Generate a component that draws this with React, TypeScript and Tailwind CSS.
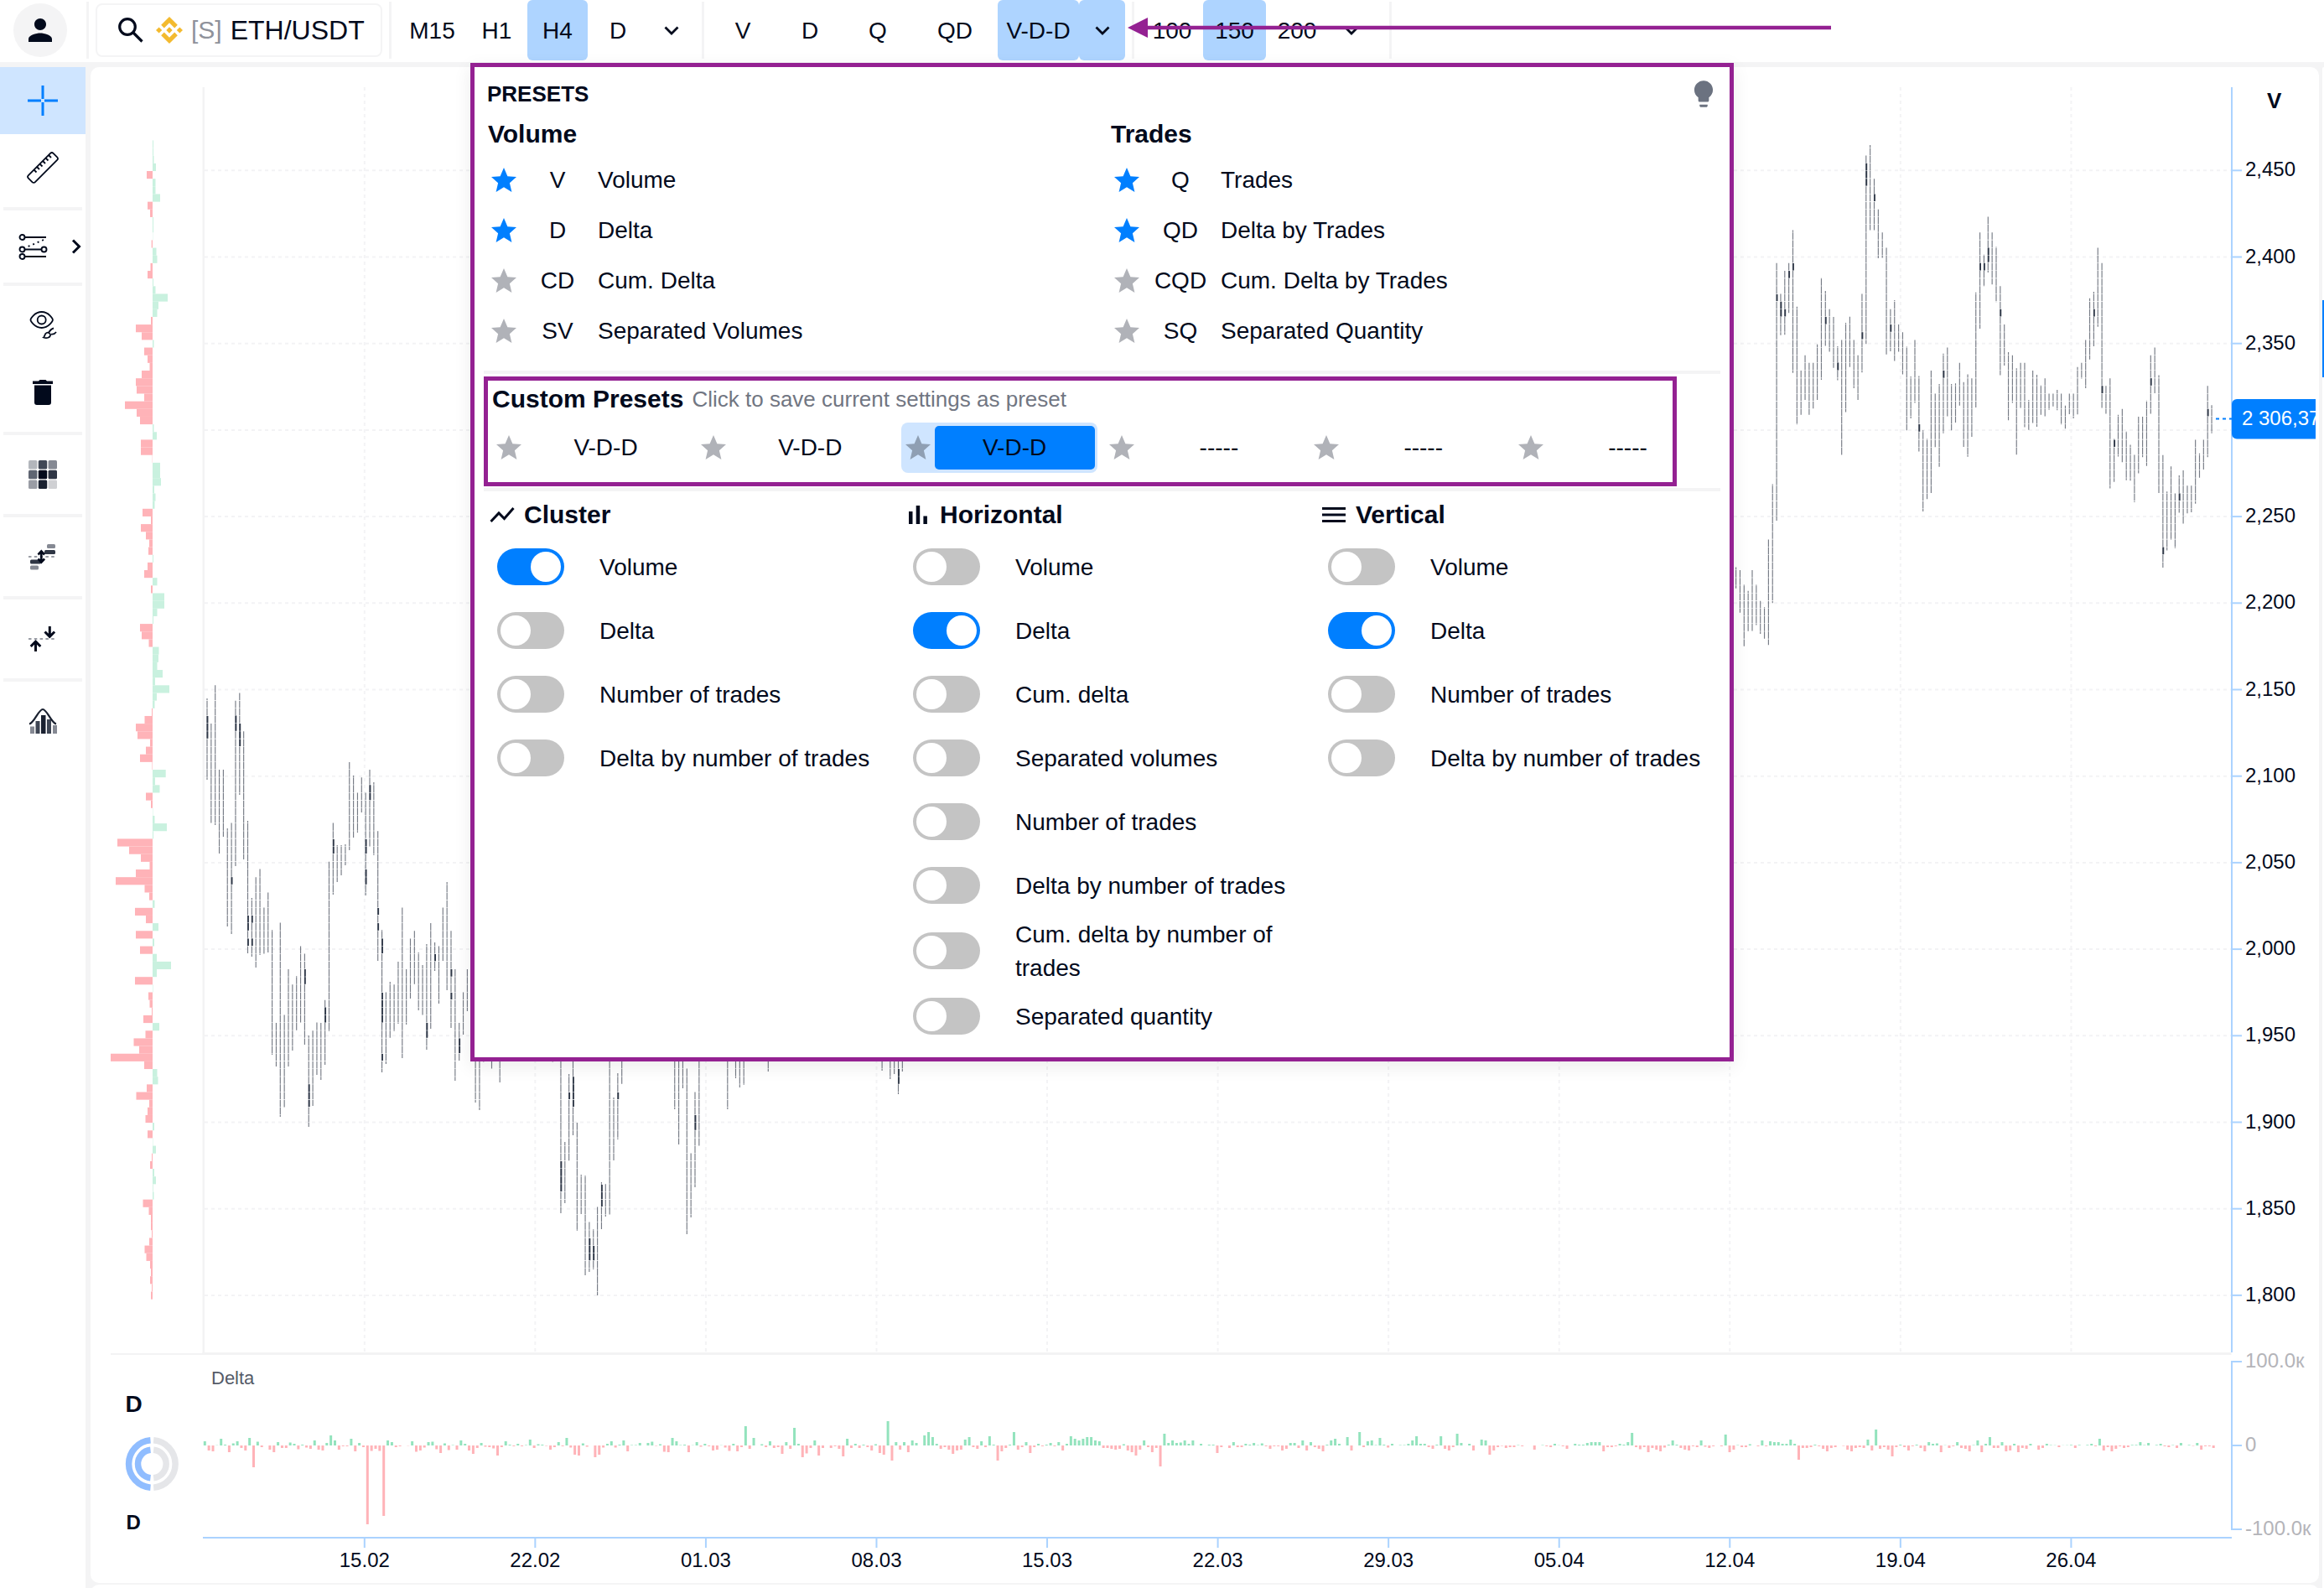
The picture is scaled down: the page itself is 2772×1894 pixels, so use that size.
import React from "react";
import { MdLightbulb, MdPerson } from "react-icons/md";

// [index, top, bottom, ...dark cluster segments (from, to)]
type Bar = number[];

const STEP = 4.85;
const ROW = 9.154;
const ROW_START = 167.4;
const PRICE_X = 247;
const DELTA_X = 244.3;
const DELTA_ZERO = 1724;

const LEFT_BARS: Bar[] = [
  [0, 833, 930, 854, 881], [1, 863, 982], [2, 817, 984], [3, 918, 1018], [4, 918, 998], [5, 988, 1105],
  [6, 981, 1114, 1046, 1055], [7, 835, 1033, 853, 872], [8, 826, 948, 863, 890], [9, 872, 1025],
  [10, 979, 1137, 1092, 1110, 1119, 1128], [11, 1071, 1141, 1092, 1101, 1119, 1128], [12, 1046, 1154],
  [13, 1036, 1139], [14, 1082, 1138], [15, 1064, 1136], [16, 1109, 1258], [17, 1220, 1272], [18, 1100, 1332],
  [19, 1210, 1321], [20, 1156, 1272], [21, 1174, 1253], [22, 1164, 1229], [23, 1128, 1220],
  [24, 1137, 1246, 1156, 1174], [25, 1235, 1344, 1293, 1320], [26, 1229, 1319], [27, 1219, 1282],
  [28, 1220, 1288], [29, 1192, 1270, 1201, 1220], [30, 1027, 1230], [31, 981, 1067, 1001, 1018],
  [32, 1008, 1052], [33, 1008, 1044], [34, 1007, 1032], [35, 909, 1014], [36, 925, 999], [37, 945, 993],
  [38, 927, 969], [39, 945, 1068, 1001, 1018, 1037, 1055], [40, 918, 1010, 936, 955], [41, 933, 1020],
  [42, 991, 1146, 1083, 1091, 1101, 1110], [43, 1109, 1279, 1119, 1137, 1184, 1220, 1257, 1265],
  [44, 1183, 1269], [45, 1171, 1238], [46, 1174, 1230], [47, 1147, 1221], [48, 1082, 1262], [49, 1156, 1222],
  [50, 1119, 1191], [51, 1110, 1174], [52, 1136, 1205], [53, 1151, 1211], [54, 1126, 1252, 1220, 1238],
  [55, 1101, 1227], [56, 1124, 1158, 1138, 1147], [57, 1128, 1197], [58, 1082, 1146], [59, 1052, 1181],
  [60, 1110, 1226, 1156, 1165, 1184, 1192], [61, 1156, 1289], [62, 1220, 1265, 1238, 1256],
  [63, 1183, 1234], [64, 1156, 1206], [66, 1220, 1315], [67, 1220, 1324], [68, 1240, 1266.5],
  [70, 1240, 1275], [72, 1240, 1291], [85, 1240, 1266.5], [87, 1240, 1447, 1385, 1421], [88, 1362, 1435],
  [89, 1281, 1385, 1303, 1311], [90, 1240, 1354, 1284, 1320], [91, 1339, 1468], [92, 1401, 1448],
  [93, 1402, 1521], [94, 1457, 1517, 1477, 1504], [95, 1466, 1514, 1486, 1504], [96, 1439, 1545],
  [97, 1410, 1466, 1413, 1439], [98, 1412, 1451], [99, 1240, 1449], [100, 1309, 1384],
  [101, 1280, 1359, 1303, 1311], [102, 1240, 1293], [115, 1240, 1323], [116, 1240, 1365], [117, 1240, 1298],
  [118, 1274, 1472], [119, 1375, 1452], [120, 1302, 1416, 1330, 1348], [121, 1240, 1367], [128, 1240, 1323],
  [130, 1240, 1286], [131, 1240, 1297], [132, 1240, 1294], [138, 1240, 1278], [166, 1240, 1277],
  [168, 1240, 1287], [169, 1240, 1281], [170, 1240, 1305, 1275, 1293], [171, 1240, 1278],
];

// stored in ticks from the top of the right-hand segment
const RIGHT_START = 376;
const RIGHT_BARS: Bar[] = [
  [1343, 1398], [1350, 1461], [1388, 1548], [1404, 1510], [1349, 1508], [1388, 1493], [1429, 1516], [1447, 1530],
  [1270, 1545], [1127, 1436], [552, 1222, 634, 652], [632, 740, 652, 692], [572, 739, 672, 692],
  [552, 682, 573, 592], [467, 838, 553, 572], [666, 972], [831, 947], [792, 908], [811, 947], [811, 931],
  [764, 908], [591, 856], [625, 768, 692, 712], [672, 783], [692, 825], [769, 857, 810, 831], [751, 1052],
  [708, 940], [691, 823], [751, 878], [791, 908], [632, 837, 732, 750], [272, 763, 293, 352], [246, 467],
  [333, 467, 373, 392], [413, 540], [472, 539], [512, 790], [672, 782, 712, 732], [649, 807], [711, 783],
  [732, 842], [770, 987], [847, 956], [751, 916], [846, 1042, 971, 991], [987, 1198], [1009, 1166], [831, 1151],
  [891, 1032], [867, 1082], [788, 995, 831, 851], [771, 951], [867, 987], [865, 967], [811, 923], [862, 1030],
  [842, 1056], [851, 1004], [629, 928], [472, 723, 552, 572], [531, 613, 552, 572], [431, 577, 513, 550],
  [472, 608], [511, 654], [612, 844, 672, 692], [711, 819], [784, 961], [792, 916], [826, 1051], [811, 929],
  [811, 979], [908, 986], [831, 968], [843, 978], [870, 947], [851, 952], [891, 934], [891, 925], [882, 935],
  [891, 972], [923, 983], [891, 945], [891, 956], [823, 946], [811, 853], [752, 878], [644, 803],
  [627, 769, 672, 692], [512, 718], [552, 929, 871, 892], [871, 944], [851, 1138], [1009, 1121, 1012, 1030],
  [947, 1055], [931, 1071], [990, 1117], [1025, 1118], [1050, 1174], [951, 1099], [951, 1057], [910, 1080],
  [791, 944, 851, 871], [771, 891], [844, 1151], [1051, 1344, 1290, 1310], [1146, 1299], [1081, 1272],
  [1150, 1293], [1104, 1201, 1150, 1170], [1090, 1230], [1130, 1203], [1130, 1200], [1010, 1178], [1047, 1111],
  [1010, 1089], [871, 1057, 931, 951], [922, 995],
];

const PROFILE = [
  1, 1, 1.5, 4, -7, 3.5, 3.5, 9, -6, -3, 1, 1, 0.3, -1.3, 4.5, 5.5, -2.5, -6, 1, 3.5, 18, 7, 5.5, -2, -20, -13, 1.5,
  -10, -6, -3.5, -13, -20, -19, -10, -33, -19, -15, 1.5, 5, -14, -14, -0.3, 9, 9, 10, 2, 3.5, 2.5, -12, -2, -14, -8,
  -4, -5, 1, -6, -10, 5.5, -2, 14, 14, 5.5, 1, -15, -13, -4.5, 7.5, 7, 5.5, 12, 3, 20, 5, 2.5, -1, -9.5, -20, -18,
  -3, -8, -15, -0.5, 15.7, 3, 8.5, -8, -2, 0.4, 2.5, 17, 1, -42, -28, -14, -3.5, -20, -44, -9.5, -4, 2.5, -21, -8, 7,
  -20, 2, -15, 5, 22, 5, -21, 0.5, -5, -3.5, -1, -11, 8, -8.5, -22.5, -16, -50, -10, 5.5, 6.5, -7, -19.5, -4, -6,
  -8.5, 2, -6, 0.4, 4, -1, -3, 2, 4, 0.7, 1.5, -11.5, -4.5, -2, -2, -1, -4, -9.5, -7.5, -3, -2, -3, -1, -2,
];

const DELTA = [
  5, -6, -7, 0.3, 8, 1, -8, 2.5, 5, -3, -6, 9, -26, 4.5, -2, 0, -5, -8, 4, -3, -3, 3.5, 2, -4.5, 1, -2.5, -4, 6, -5,
  -6, 3, 12, 6, -5, -1, -1, 8, -7, 3, -2, -94, -6.5, -4, -6.5, -84, 6, 4, -2, -1, 0, -0.3, 5, -7.5, -6, -2.5, 4, 4.5,
  -4.5, -9, 2.5, -5.5, 0.5, -5, 6, 2, -6, -10, -3, 3, -1.5, -2, -3.5, -12, -2, 5, 1, -1, 2, -1, 0.5, 7, -3, 1.5, 1,
  -0.5, -5, -2, 4, -1, 9, -2.5, -11, -12, 2.5, -1.5, 0, -14, -11, -2.5, 2, 5, -2.5, 1, 6, -7, 0.5, 0.5, 3, 0, 3, 4.5,
  -0.5, 1.5, -7.5, -8, 9, 5, 0.5, 1, -8, 0.3, 4, -1.5, 2, -1, -6, -5, 0.3, -2.5, -6.5, 2, -7, -2, 23, -4, 9, 0, 1.5,
  -2, 5, -3, -2, -10, 4, -4, 21, 2, -14, -9.5, -3, 6, -12, -3, 0, -3, -1, -4, -13, 8, -3, 2, -3, 1, -2, -6, 1.5, -9,
  -11, 29, -18, 4, -5, 4, -8, 6, 3, 0, 12, 16, 10, 2, -4, -2, -5, -10, -6, -5, 7, 10, -2, -4, 5, -2, 11, 1, -18, -7,
  -3, 1, 16, -5, -2, 4, -9, -2, 2, -1, 1, 3, -1, 4, -6, 2, 11, 8, 6, 8, 10, 10, 6, 5, -3, -3, -4, -5, -4, 1.5, -6, -8,
  -12, -5, 6, -2, -8, -3, -25, 14, 3, 6, 3, 3.5, 6, 2, 6, 0, 2, 0, 1, 1, -9, -2, 0, -3, 4, -2, -2, 2, 1, 3, 0.5, 2.5,
  -1, -4, -1, -1, -6, -4, 3, 3, -3, 6, -6, 4, -2, -4, -7, 1, 6, 8, 2, 0, 10, -6, 0, 16, -2, 5, 6, 0.5, 9, 1, -2.5, 2,
  0, 0.5, 0.5, 2, 6, 11, 2, 2, -2, -4, 1, 11, -4, -6, -2, 14, 3, 0, 2, -6, 0, 7, 6, -11, -6, -2, -0.5, -3, -2, -2,
  0.5, -1, 0, 0, -5, 0, 0.5, -1, -2, 2, 0.3, -1, -4, 0, 2, 1, 1, 3, 4, 4, 4, -7, -2, -2, -1, 2, 1, 4, 15, -2, -4.5,
  -2, -8, -3, -5, -7, -2.5, 1, 6, 1, -3, -5, -6, -1, -2, 6, -1.5, -3, -1, 0, -1, 13, -8, -5, 0.5, -2, -2, 1.5, 0, -1,
  6, -1, 5, 4, 4, 2, 2, 7, 2, -17, -3, -3, -2, 1, -1, -4, -7, -3, -2, 0, -0.5, -5, -7, -3, -2, -3, 7, -6, 19, -4, -2,
  -5, -13, -2, 1, -2, -6, -1, 1, -3, -7, 4, 2, 2.5, -8, 0.3, -3, -1, 4, -3, -4, -7, 0.5, 6, -8, 2, 10, -3, -3, 4, -7,
  -6, 2, -8, -3, -4, 2, 0, -5, -3, 2, 0.5, 0.3, -2, 0.2, 0.3, 0.7, -3, 0.7, 0, 0.7, 2, -1, 8, -6, -2, -7, -4, -1, -3,
  -2, 0.7, 0.7, 4, 0.5, 3, 0, 0.7, 2, -1, -2, 0.5, -3, 3, 0, 0.7, -0.5, 3, -5, -1, -1, -3,
];

const PRICES = [
  "2,450", "2,400", "2,350", "", "2,250", "2,200", "2,150", "2,100", "2,050", "2,000", "1,950", "1,900", "1,850", "1,800",
];
const DATES = ["15.02", "22.02", "01.03", "08.03", "15.03", "22.03", "29.03", "05.04", "12.04", "19.04", "26.04"];

const priceY = (i: number) => 203.3 + i * 103.2;
const dateX = (i: number) => 434.8 + i * 203.56;

function Candle({ index, bar }: { index: number; bar: Bar }) {
  const x = PRICE_X + index * STEP;
  const [top, bottom, ...dark] = bar;
  const segments = [];
  for (let i = 0; i < dark.length; i += 2) {
    segments.push([dark[i], dark[i + 1]]);
  }
  return (
    <g>
      <line
        x1={x}
        x2={x}
        y1={top}
        y2={bottom}
        stroke="#1b2333"
        strokeOpacity={0.6}
        strokeWidth={1.15}
        strokeDasharray={`${ROW - 0.55} 0.55`}
        strokeDashoffset={(top - ROW_START) % ROW}
      />
      {segments.map(([from, to]) => (
        <line
          key={from}
          x1={x + 0.5}
          x2={x + 0.5}
          y1={from}
          y2={to}
          stroke="#2f3848"
          strokeWidth={1.8}
          strokeDasharray={`${ROW - 0.55} 0.55`}
          strokeDashoffset={(from - ROW_START) % ROW}
        />
      ))}
    </g>
  );
}

function Chart() {
  return (
    <svg width="2658" height="1808" viewBox="108 80 2658 1808" fontFamily="'Liberation Sans', Arial, sans-serif">
      {/* grid */}
      <g stroke="#f3f3f5" strokeWidth="2" strokeDasharray="4 4">
        {PRICES.map((_, i) => (
          <line key={i} x1="244" x2="2661" y1={priceY(i)} y2={priceY(i)} />
        ))}
        {DATES.map((_, i) => (
          <line key={i} x1={dateX(i)} x2={dateX(i)} y1="104" y2="1612" />
        ))}
      </g>
      <rect x="241.5" y="104" width="2.5" height="1510" fill="#f3f3f4" />
      <rect x="132" y="1614" width="110" height="2" fill="#f3f3f4" />
      <rect x="241.5" y="1613" width="2420" height="3" fill="#f3f3f4" />

      {/* horizontal delta profile */}
      {PROFILE.map((v, i) => (
        <rect
          key={i}
          x={v < 0 ? 182 + v : 182}
          y={ROW_START + i * ROW}
          width={Math.abs(v)}
          height={ROW}
          fill={v < 0 ? "#ffb3b8" : "#c9f1df"}
        />
      ))}

      {/* clusters */}
      {LEFT_BARS.map(([index, ...bar]) => (
        <Candle key={index} index={index} bar={bar} />
      ))}
      {RIGHT_BARS.map((bar, i) => (
        <Candle key={i} index={RIGHT_START + i} bar={bar.map((v) => v / 2.178 + 60)} />
      ))}

      {/* delta histogram */}
      {DELTA.map((v, i) => (
        <rect
          key={i}
          x={DELTA_X + i * STEP - 1.5}
          y={v < 0 ? DELTA_ZERO : DELTA_ZERO - v}
          width="3"
          height={Math.abs(v)}
          fill={v < 0 ? "#ffb3b8" : "#93e3bd"}
        />
      ))}

      {/* price axis */}
      <rect x="2661" y="104" width="2" height="1509" fill="#abd3ff" />
      {PRICES.map((label, i) => (
        <g key={i}>
          {label && <rect x="2663" y={priceY(i) - 1} width="11" height="2" fill="#abd3ff" />}
          <text x="2678" y={priceY(i) + 7} fontSize="24" fill="#020a1c">
            {label}
          </text>
        </g>
      ))}
      <text x="2704" y="129" fontSize="26" fontWeight="700" fill="#020a1c">
        V
      </text>
      <line x1="2643" x2="2662" y1="499.5" y2="499.5" stroke="#007fff" strokeWidth="2" strokeDasharray="4 4" />
      <path d="M2762 476h-94a6 6 0 0 0-6 6v35.500a6 6 0 0 0 6 6h94z" fill="#007fff" />
      <svg x="2662" y="476" width="100" height="48">
        <text x="12" y="31" fontSize="24" fill="#fff">
          2 306,37
        </text>
      </svg>

      {/* delta axis */}
      <rect x="2661" y="1623" width="2" height="202" fill="#abd3ff" />
      {["100.0к", "0", "-100.0к"].map((label, i) => (
        <g key={label}>
          <rect x="2663" y={1623 + i * 100} width="11" height="2" fill="#abd3ff" />
          <text x="2678" y={1631 + i * 100} fontSize="24" fill="#b4b4b9">
            {label}
          </text>
        </g>
      ))}

      {/* time axis */}
      <rect x="242" y="1833" width="2420" height="2" fill="#abd3ff" />
      {DATES.map((label, i) => (
        <g key={label}>
          <rect x={dateX(i) - 1} y="1835" width="2" height="11" fill="#abd3ff" />
          <text x={dateX(i)} y="1869" fontSize="24" textAnchor="middle" fill="#020a1c">
            {label}
          </text>
        </g>
      ))}

      <text x="252" y="1651" fontSize="22" fill="#555b68">
        Delta
      </text>
      <text x="149.500" y="1683.500" fontSize="28" fontWeight="700" fill="#020a1c">
        D
      </text>
      <text x="150.500" y="1824" fontSize="24" fontWeight="700" fill="#020a1c">
        D
      </text>
      <g fill="none" strokeWidth="7.500">
        <path d="M179.500 1717.800a28.300 28.300 0 0 0 0 56.400M179.500 1729.300a16.800 16.800 0 0 0 0 33.400" stroke="#90bdff" />
        <path d="M183.200 1717.800a28.300 28.300 0 0 1 0 56.400M183.200 1729.300a16.800 16.800 0 0 1 0 33.400" stroke="#e5e6e9" />
      </g>
    </svg>
  );
}

function Divider() {
  return <div className="h-[68px] w-[3px] shrink-0 bg-[#f4f4f5]" />;
}

function Chevron() {
  return (
    <svg width="18" height="12" viewBox="0 0 18 12" fill="none" stroke="#020a1c" strokeWidth="2.800">
      <path d="M1.500 1.500 9 9l7.500-7.500" />
    </svg>
  );
}

interface TabProps {
  width: string;
  active?: boolean;
  children: React.ReactNode;
}

function Tab({ width, active, children }: TabProps) {
  return (
    <div
      className={`flex h-[72px] shrink-0 items-center justify-center self-start rounded-md pt-[2px] text-[28px] ${width} ${
        active ? "bg-[#aed4ff]" : ""
      }`}
    >
      {children}
    </div>
  );
}

function Header() {
  return (
    <header className="flex h-[74px] items-center bg-white pb-[2px]">
      <div className="ml-4 flex size-16 shrink-0 items-center justify-center rounded-full bg-[#f4f4f5]">
        <MdPerson className="size-[42px]" />
      </div>
      <div className="ml-[23px]">
        <Divider />
      </div>
      <div className="ml-[8px] mr-[8px] flex h-16 w-[342px] shrink-0 items-center rounded-lg border-2 border-[#f4f4f5] pl-[24px]">
        <svg width="32" height="32" viewBox="0 0 32 32" fill="none" stroke="#020a1c" strokeWidth="3.200">
          <circle cx="12" cy="12" r="9.300" />
          <path d="m18.500 18.500 11 11" />
        </svg>
        <svg className="ml-[14px]" width="32" height="32" viewBox="0 0 126.600 126.600" fill="#f3ba2f">
          <path d="m38.700 53.200 24.600-24.600 24.600 24.600 14.300-14.300L63.300 0 24.400 38.900zM0 63.300 14.300 49l14.300 14.300-14.300 14.300zM38.700 73.400l24.600 24.600 24.600-24.600 14.300 14.300-38.900 38.900-38.900-38.900zM98 63.300 112.300 49l14.300 14.300-14.300 14.300zM77.800 63.300 63.300 48.800 48.800 63.300l14.500 14.500z" />
        </svg>
        <span className="ml-[10px] text-[30px] text-[#8f929b]">[S]</span>
        <span className="ml-[10px] text-[32px]">ETH/USDT</span>
      </div>
      <Divider />
      <div className="flex w-[370px] shrink-0 self-start pl-[8px]">
        <Tab width="w-[81px]">M15</Tab>
        <Tab width="w-[73px]">H1</Tab>
        <Tab width="w-[72px]" active>H4</Tab>
        <Tab width="w-[72px]">D</Tab>
        <Tab width="w-[56px]"><Chevron /></Tab>
      </div>
      <Divider />
      <div className="flex w-[510px] shrink-0 self-start pl-[6px]">
        <Tab width="w-[80px]">V</Tab>
        <Tab width="w-[80px]">D</Tab>
        <Tab width="w-[82px]">Q</Tab>
        <Tab width="w-[102px]">QD</Tab>
        <Tab width="w-[97px]" active>V-D-D</Tab>
        <Tab width="w-[55px]" active><Chevron /></Tab>
      </div>
      <Divider />
      <div className="flex w-[304px] shrink-0 self-start pl-[8px]">
        <Tab width="w-[74px]">100</Tab>
        <Tab width="w-[75px]" active>150</Tab>
        <Tab width="w-[74px]">200</Tab>
        <Tab width="w-[56px]"><Chevron /></Tab>
      </div>
      <Divider />
    </header>
  );
}

function SidebarLine() {
  return <div className="mx-1 h-1 shrink-0 bg-[#f4f4f5]" />;
}

const GRID_COLORS = [
  "#b3b6bc", "#414856", "#858993", "#5f6572", "#020a1c", "#2f3645", "#9a9da5", "#1a2130", "#cfd0d3",
];

function Sidebar() {
  return (
    <aside className="flex w-[102px] shrink-0 flex-col bg-white">
      <div className="flex h-20 items-center justify-center bg-[#cfe5ff]">
        <svg width="40" height="40" viewBox="0 0 40 40" stroke="#007fff" strokeWidth="3">
          <path d="M2 20h16M22 20h16M20 2v16M20 22v16" />
        </svg>
      </div>
      <div className="mb-[7px] flex h-20 items-center justify-center">
        <svg width="40" height="40" viewBox="0 0 40 40" fill="none" stroke="#020a1c" strokeWidth="1.800">
          <rect x="-1" y="14.300" width="42" height="11.400" rx="2.500" transform="rotate(-45 20 20)" />
          <path d="m9.500 22.500 3 3M13 19l3 3M16.500 15.500l3 3M20 12l3 3M23.500 8.500l3 3M27 5l3 3" />
        </svg>
      </div>
      <SidebarLine />
      <div className="flex h-[86px] items-center pl-[22px]">
        <svg width="36" height="34" viewBox="0 0 36 34" fill="none" stroke="#020a1c" strokeWidth="1.900">
          <circle cx="4.500" cy="6" r="3" />
          <circle cx="4.500" cy="20.500" r="3" />
          <circle cx="30.500" cy="20.500" r="3" />
          <circle cx="4.500" cy="29" r="3" />
          <path d="M7.500 6H33M7.500 20.500h20M7.500 29H33" />
          <path d="M30 9 8 18.500" strokeDasharray="2 4" />
        </svg>
        <svg className="ml-[27px]" width="12" height="18" viewBox="0 0 12 18" fill="none" stroke="#020a1c" strokeWidth="3">
          <path d="m2 1.500 7.500 7.500L2 16.500" />
        </svg>
      </div>
      <SidebarLine />
      <div className="flex h-[174px] flex-col items-center pt-[5px]">
        <div className="flex h-[81px] items-center">
          <svg width="40" height="40" viewBox="0 0 40 40" fill="none" stroke="#020a1c" strokeWidth="1.800">
            <path d="M5.500 14.500c0-1 4.500-9.500 13.200-9.500s13.200 8.500 13.200 9.500-4.500 9.500-13.200 9.500S5.500 15.500 5.500 14.500z" />
            <circle cx="18.700" cy="14.500" r="5" />
            <path d="M21 35.500c1.500-1 1-4.500 3.500-5.500s5 1 4.500 3.200-4 3.800-8 2.300zM27 29.800c1.500-2.500 4.500-5 6-5.300M30 31.500c2 .5 4.500-.5 6-2.500" />
          </svg>
        </div>
        <div className="flex h-[81px] items-center">
          <svg width="24" height="30" viewBox="0 0 24 30" fill="#020a1c">
            <path d="M0 1.500h7L8.500 0h7L17 1.500h7V5H0zM2 6.500h20V27a3 3 0 0 1-3 3H5a3 3 0 0 1-3-3z" />
          </svg>
        </div>
      </div>
      <SidebarLine />
      <div className="flex h-[94px] items-center justify-center">
        <svg width="34" height="34" viewBox="0 0 34 34">
          {GRID_COLORS.map((color, i) => (
            <rect key={i} x={(i % 3) * 11.8} y={Math.floor(i / 3) * 11.8} width="10.400" height="10.400" rx="1.500" fill={color} />
          ))}
        </svg>
      </div>
      <SidebarLine />
      <div className="flex h-[94px] items-center justify-center">
        <svg width="34" height="32" viewBox="0 0 34 32">
          <path d="M0 16h33" stroke="#9a9da5" strokeWidth="2" strokeDasharray="3.500 3.300" />
          <rect x="22" y="1" width="10" height="5" rx="1.500" fill="#858993" />
          <rect x="19" y="8" width="13" height="5" rx="1.500" fill="#2f3645" />
          <rect x="2" y="19.500" width="13" height="5" rx="1.500" fill="#2f3645" />
          <rect x="2" y="26.500" width="10" height="5" rx="1.500" fill="#858993" />
          <path d="M15.300 10v12M11.500 13.500l3.800-4 3.800 4M11.500 18.500l3.800 4 3.800-4" fill="none" stroke="#020a1c" strokeWidth="2.600" />
        </svg>
      </div>
      <SidebarLine />
      <div className="flex h-[94px] items-center justify-center">
        <svg width="34" height="32" viewBox="0 0 34 32">
          <path d="M0 16h33" stroke="#9a9da5" strokeWidth="2" strokeDasharray="3.500 3.300" />
          <path
            d="M25.300 1v12M19.500 7.500l5.800 5.800 5.800-5.800M8.500 31V19M2.700 25l5.800-5.800 5.800 5.800"
            fill="none"
            stroke="#020a1c"
            strokeWidth="3"
          />
        </svg>
      </div>
      <SidebarLine />
      <div className="flex h-[94px] items-center justify-center">
        <svg width="34" height="32" viewBox="0 0 34 32">
          <rect x="2" y="22.500" width="5" height="8.500" fill="#858993" />
          <rect x="8.500" y="16" width="5" height="15" fill="#3f4654" />
          <rect x="15" y="9" width="5.500" height="22" fill="#1a2130" />
          <rect x="22" y="14" width="5" height="17" fill="#3f4654" />
          <rect x="29" y="21" width="5" height="10" fill="#858993" />
          <path d="M1 19.500c6-1.500 11-17.500 16-17.500s10 16 16 17.500" fill="none" stroke="#1a2130" strokeWidth="2.200" />
        </svg>
      </div>
    </aside>
  );
}

function Star({ color = "#b0b2b8" }: { color?: string }) {
  return (
    <svg width="30" height="29" viewBox="0 0 30 29" fill={color}>
      <path d="M15 0l4.400 10.200L30 11.100l-8.100 7.200 2.500 10.700L15 23.300 5.600 29l2.500-10.700L0 11.100l10.600-.9z" />
    </svg>
  );
}

interface Preset {
  code: string;
  label: string;
  starred?: boolean;
}

const VOLUME_PRESETS: Preset[] = [
  { code: "V", label: "Volume", starred: true },
  { code: "D", label: "Delta", starred: true },
  { code: "CD", label: "Cum. Delta" },
  { code: "SV", label: "Separated Volumes" },
];

const TRADES_PRESETS: Preset[] = [
  { code: "Q", label: "Trades", starred: true },
  { code: "QD", label: "Delta by Trades", starred: true },
  { code: "CQD", label: "Cum. Delta by Trades" },
  { code: "SQ", label: "Separated Quantity" },
];

const CUSTOM_PRESETS = ["V-D-D", "V-D-D", "V-D-D", "-----", "-----", "-----"];

function PresetList({ title, presets }: { title: string; presets: Preset[] }) {
  return (
    <div className="w-[743px] shrink-0">
      <div className="flex h-[48px] items-center text-[30px] font-bold">{title}</div>
      <div className="mt-[1px]">
        {presets.map((p) => (
          <div key={p.code} className="flex h-[60px] items-center pl-[4px]">
            <div className="mb-[2px]">
              <Star color={p.starred ? "#007fff" : undefined} />
            </div>
            <span className="ml-[9px] w-[80px] text-center">{p.code}</span>
            <span className="ml-[8px]">{p.label}</span>
          </div>
        ))}
      </div>
    </div>
  );
}

function Toggle({ on }: { on?: boolean }) {
  return (
    <div
      className={`flex h-[44px] w-[80px] shrink-0 items-center rounded-full px-1 ${
        on ? "justify-end bg-[#007fff]" : "bg-[#c4c4c4]"
      }`}
    >
      <div className="size-9 rounded-full bg-white" />
    </div>
  );
}

interface ToggleColumnProps {
  title: string;
  icon: React.ReactNode;
  items: string[];
  active: string;
  className?: string;
}

function ToggleColumn({ title, icon, items, active, className }: ToggleColumnProps) {
  return (
    <div className={`w-[495px] shrink-0 ${className ?? ""}`}>
      <div className="flex h-[52px] items-center pt-[4px] text-[30px] font-bold">
        {icon}
        {title}
      </div>
      {items.map((item) => (
        <div key={item} className="flex min-h-[76px] items-center pl-[11px]">
          <Toggle on={item === active} />
          <span className="ml-[42px] w-[340px] translate-y-px leading-[40px]">{item}</span>
        </div>
      ))}
    </div>
  );
}

function PresetsPanel() {
  return (
    <div className="absolute left-[561px] top-[75px] h-[1191px] w-[1507px] border-[5px] border-[#942192] bg-white pl-[11px] text-[28px] shadow-[0_6px_20px_rgba(0,0,0,0.08)]">
      <div className="flex h-[56px] items-center justify-between pl-[4px] pr-[12px] pt-[8px]">
        <span className="text-[26px] font-bold">PRESETS</span>
        <MdLightbulb className="size-[38px] text-[#6b7280]" />
      </div>
      <div className="flex h-[306px] pl-[5px]">
        <PresetList title="Volume" presets={VOLUME_PRESETS} />
        <PresetList title="Trades" presets={TRADES_PRESETS} />
      </div>
      <div className="h-1 w-[1475px] bg-[#f4f4f5]" />
      <div className="mt-[3px] h-[131px] w-[1423px] border-[5px] border-[#942192] pl-[5px]">
        <div className="flex h-[44px] items-center">
          <span className="text-[30px] font-bold">Custom Presets</span>
          <span className="ml-[10px] text-[26px] text-[#717682]">Click to save current settings as preset</span>
        </div>
        <div className="mt-[6px] flex">
          {CUSTOM_PRESETS.map((name, i) => (
            <div
              key={i}
              className={`mr-[9.800px] flex h-[60px] w-[234px] shrink-0 items-center rounded-lg pl-[5px] ${
                i === 2 ? "bg-[#cfe5ff]" : ""
              }`}
            >
              <div className="mb-[2px]">
                <Star color={i === 2 ? "#8f9fb3" : undefined} />
              </div>
              <div
                className={`ml-[5px] flex h-[52px] w-[191px] items-center justify-center rounded-[5px] ${
                  i === 2 ? "bg-[#007fff]" : ""
                }`}
              >
                {name}
              </div>
            </div>
          ))}
        </div>
      </div>
      <div className="mt-[2px] h-1 w-[1475px] bg-[#f4f4f5]" />
      <div className="flex pl-[5px]">
        <ToggleColumn
          title="Cluster"
          active="Volume"
          items={["Volume", "Delta", "Number of trades", "Delta by number of trades"]}
          icon={
            <svg className="ml-[2px] mr-[11px]" width="30" height="20" viewBox="0 0 30 20" fill="none" stroke="#020a1c" strokeWidth="3">
              <path d="M1.500 18 11 8l6.500 6.500L28.500 2" />
            </svg>
          }
        />
        <ToggleColumn
          className="pl-[1px]"
          title="Horizontal"
          active="Delta"
          items={[
            "Volume",
            "Delta",
            "Cum. delta",
            "Separated volumes",
            "Number of trades",
            "Delta by number of trades",
            "Cum. delta by number of trades",
            "Separated quantity",
          ]}
          icon={
            <svg className="ml-[6px] mr-[15px]" width="22" height="22" viewBox="0 0 22 22" fill="#020a1c">
              <path d="M0 7h4.500v15H0zM8.700 0h4.500v22H8.700zM17.400 12.500h4.500V22h-4.500z" />
            </svg>
          }
        />
        <ToggleColumn
          className="pl-[1px]"
          title="Vertical"
          active="Delta"
          items={["Volume", "Delta", "Number of trades", "Delta by number of trades"]}
          icon={
            <svg className="ml-[4px] mr-[12px]" width="28" height="18" viewBox="0 0 28 18" fill="#020a1c">
              <path d="M0 0h28v3H0zM0 7.500h28v3H0zM0 15h28v3H0z" />
            </svg>
          }
        />
      </div>
    </div>
  );
}

export default function App() {
  return (
    <div className="relative h-[1894px] w-[2772px] overflow-hidden bg-[#f4f4f5] font-['Liberation_Sans',Arial,sans-serif] leading-none text-[#020a1c]">
      <Header />
      <div className="mt-[6px] flex h-[1814px]">
        <Sidebar />
        <main className="ml-[6px] w-[2658px] shrink-0">
          <div className="h-[1808px] overflow-hidden rounded-[10px] bg-white">
            <Chart />
          </div>
          <div className="mt-[2px] h-3 rounded-t-[10px] bg-white" />
        </main>
        <div className="ml-[4px] w-[2px] shrink-0 rounded-tl-sm bg-white pt-[278px]">
          <div className="h-[92px] bg-[#007fff]" />
        </div>
      </div>
      <PresetsPanel />
      <svg className="absolute left-[1345px] top-[20px]" width="840" height="26" viewBox="0 0 840 26" fill="#942192">
        <path d="M0 13 24 1v24zM22 10.700h817v4.600H22z" />
      </svg>
    </div>
  );
}
